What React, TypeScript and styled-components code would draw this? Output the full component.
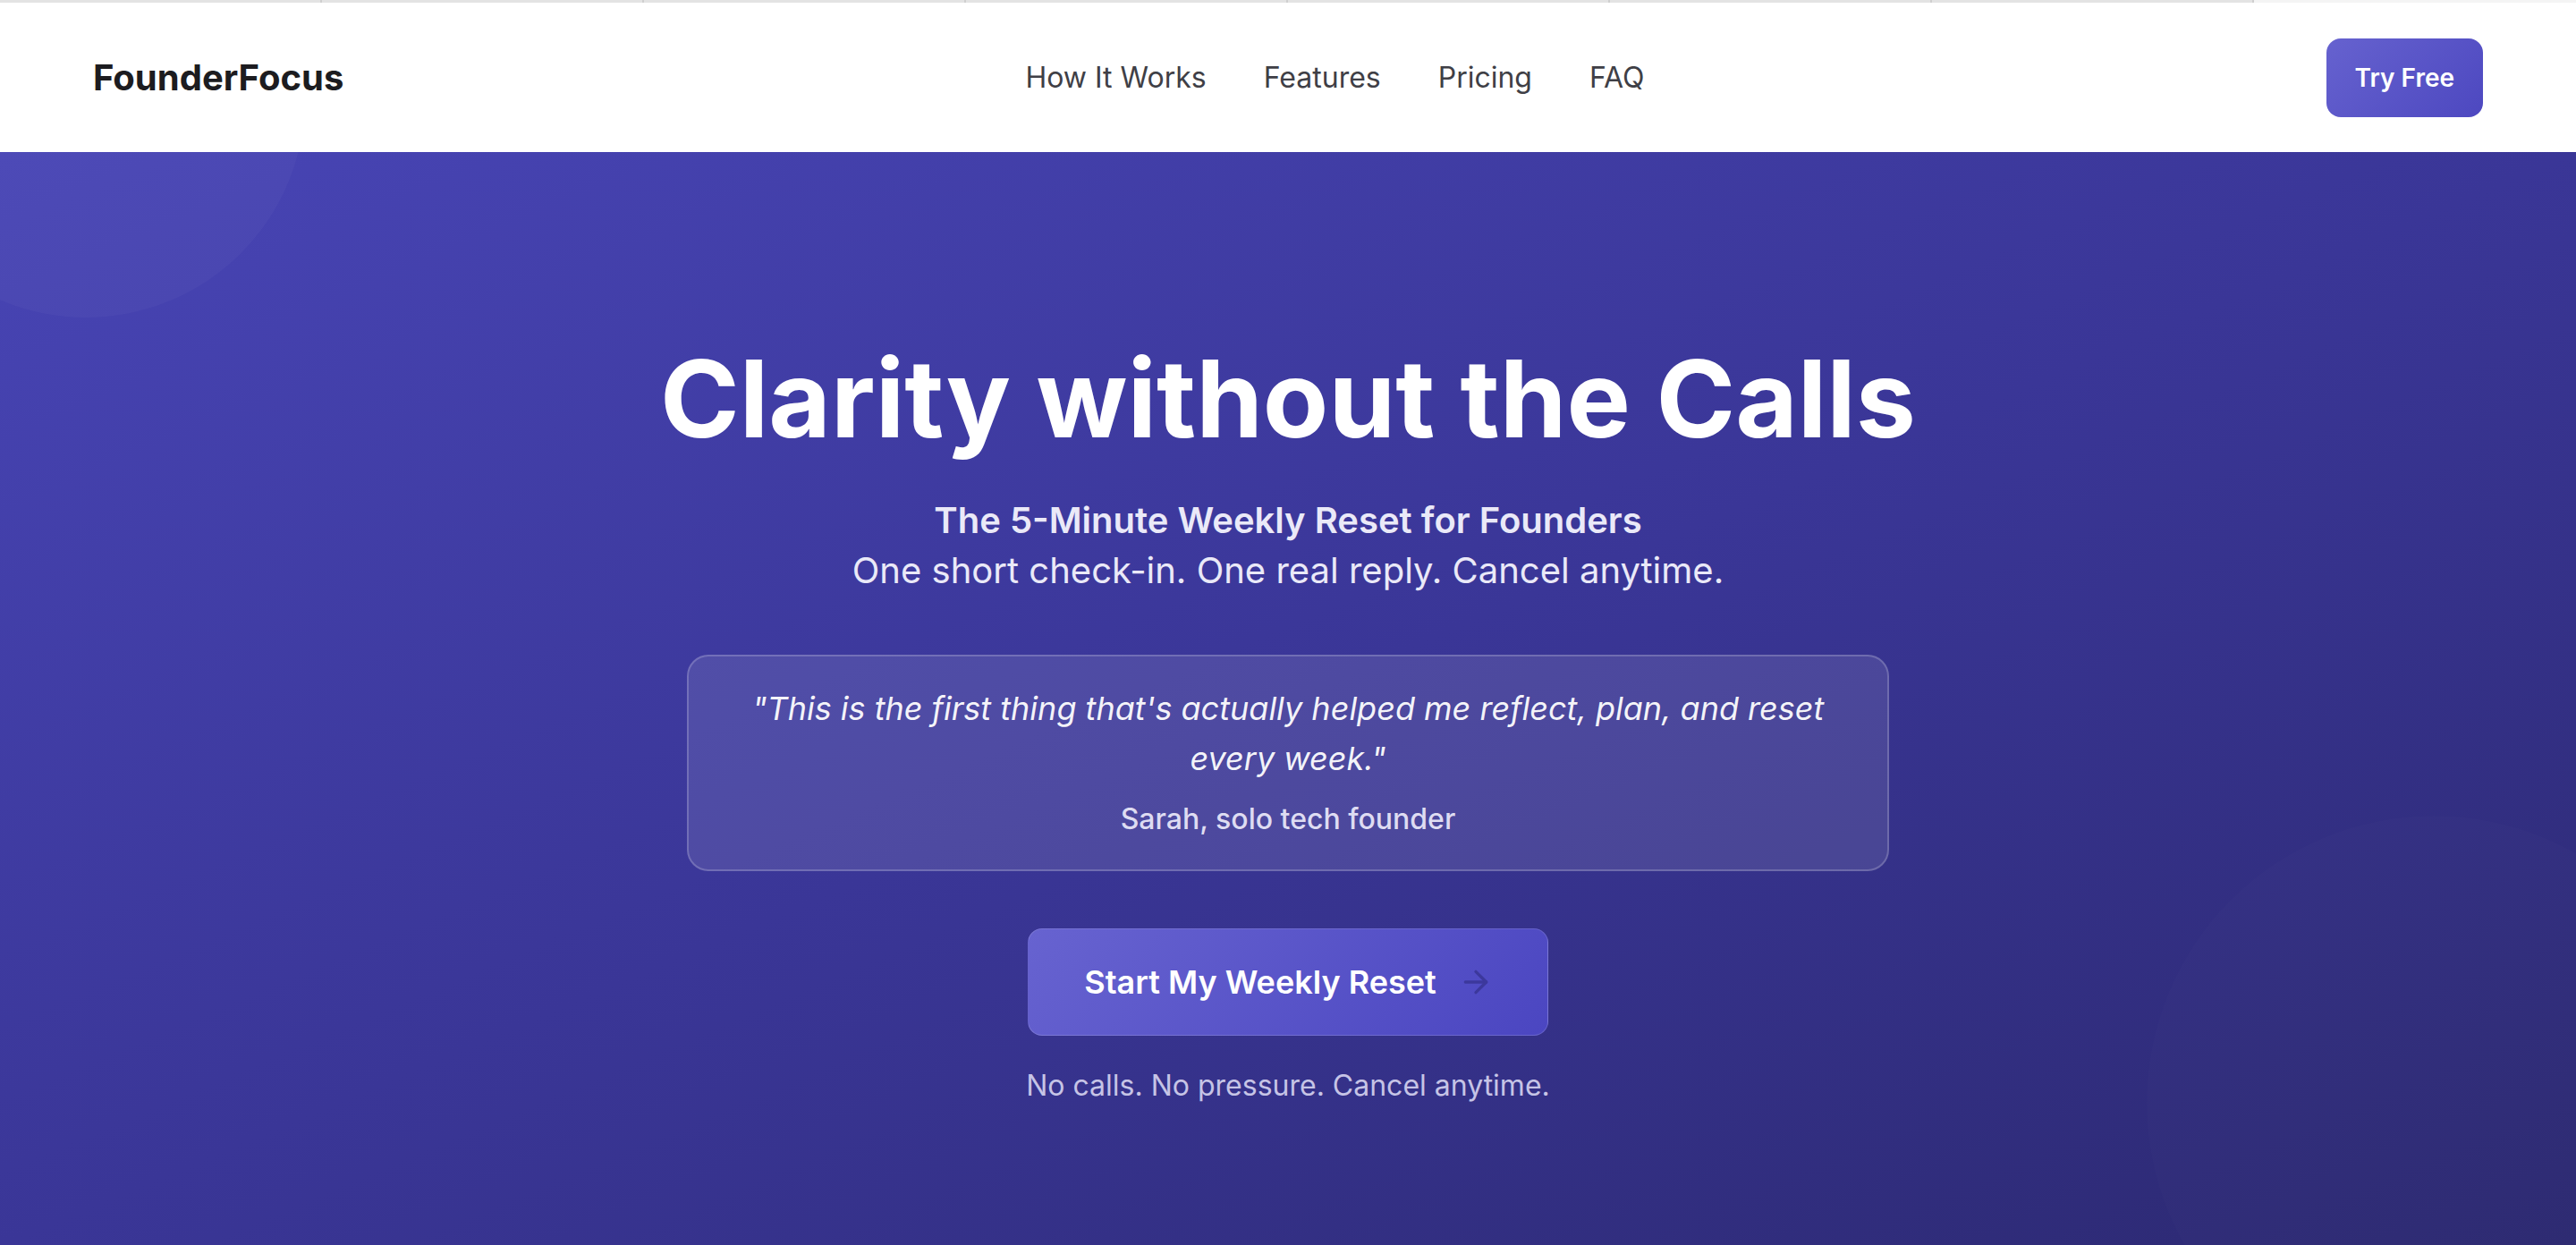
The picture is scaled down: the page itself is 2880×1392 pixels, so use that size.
import React from "react";
import styled, { createGlobalStyle } from "styled-components";
import { ArrowRight } from "lucide-react";

const GlobalStyle = createGlobalStyle`
  * { box-sizing: border-box; }
  html, body { margin: 0; padding: 0; }
  body {
    font-family: Inter, "Liberation Sans", Arial, sans-serif;
    background: #ffffff;
    -webkit-font-smoothing: antialiased;
  }
`;

const Page = styled.div`
  display: flex;
  flex-direction: column;
  min-height: 100vh;
`;

const TabStrip = styled.div`
  display: flex;
  height: 3px;
  background: #e2e2e2;
`;

const Tab = styled.div<{ $active?: boolean }>`
  flex: ${(p) => (p.$active ? "1 1 auto" : "0 0 360px")};
  background: ${(p) => (p.$active ? "#f4f4f4" : "#e3e3e3")};
  border-right: ${(p) => (p.$active ? "none" : "2px solid #cfcfcf")};
`;

const Header = styled.header`
  height: 167px;
  display: flex;
  align-items: center;
  justify-content: space-between;
  padding: 0 104px;
  background: #ffffff;
`;

const Logo = styled.div`
  font-size: 40px;
  font-weight: 700;
  color: #1c1c20;
`;

const Nav = styled.nav`
  display: flex;
  align-items: center;
  gap: 64px;
`;

const NavLink = styled.a`
  font-size: 32px;
  line-height: 48px;
  color: #3f3f46;
  text-decoration: none;
`;

const TryButton = styled.button`
  border: none;
  border-radius: 16px;
  padding: 24px 32px;
  font-family: inherit;
  font-size: 28px;
  line-height: 40px;
  font-weight: 600;
  color: #ffffff;
  background: linear-gradient(135deg, #6662cf 0%, #4d48c0 100%);
  cursor: pointer;
`;

const Hero = styled.section`
  position: relative;
  overflow: hidden;
  flex: 1;
  min-height: calc(100vh - 170px);
  background: linear-gradient(to bottom right, #4845b5 0%, #3a3697 50%, #2c2971 100%);
  display: flex;
  flex-direction: column;
  align-items: center;
  padding: 216px 0 120px;
  text-align: center;
`;

const Bubble = styled.div<{ $size: number; $alpha: number }>`
  position: absolute;
  width: ${(p) => p.$size}px;
  height: ${(p) => p.$size}px;
  border-radius: 50%;
  background: rgba(255, 255, 255, ${(p) => p.$alpha});
  pointer-events: none;
`;

const TopBubble = styled(Bubble)`
  left: -149px;
  top: -305px;
`;

const BottomBubble = styled(Bubble)`
  right: -162px;
  top: 742px;
`;

const Content = styled.div`
  position: relative;
  display: flex;
  flex-direction: column;
  align-items: center;
`;

const Title = styled.h1`
  margin: 0 0 48px;
  font-size: 120px;
  line-height: 1;
  font-weight: 700;
  color: #ffffff;
`;

const Tagline = styled.p<{ $strong?: boolean }>`
  margin: 0;
  font-size: 40px;
  line-height: 56px;
  font-weight: ${(p) => (p.$strong ? 600 : 400)};
  color: #eae9f8;
`;

const QuoteCard = styled.figure`
  margin: 66px 0 0;
  width: 1344px;
  padding: 30px 32px 32px;
  border: 2px solid rgba(255, 255, 255, 0.2);
  border-radius: 24px;
  background: rgba(255, 255, 255, 0.1);
`;

const Quote = styled.blockquote`
  margin: 0;
  font-size: 36px;
  line-height: 56px;
  font-style: italic;
  color: rgba(255, 255, 255, 0.96);
`;

const Author = styled.figcaption`
  margin-top: 16px;
  font-size: 32px;
  line-height: 48px;
  font-weight: 500;
  color: #dedcf2;
`;

const CtaButton = styled.button`
  margin-top: 64px;
  display: inline-flex;
  align-items: center;
  gap: 24px;
  padding: 31px 60px 31px 62px;
  border: 1px solid rgba(255, 255, 255, 0.14);
  border-radius: 16px;
  font-family: inherit;
  font-size: 36px;
  line-height: 56px;
  font-weight: 600;
  color: #ffffff;
  background: linear-gradient(135deg, #6763d0 0%, #4b46c1 100%);
  cursor: pointer;
`;

const ArrowIcon = styled(ArrowRight)`
  width: 40px;
  height: 40px;
  color: #3c389c;
  flex-shrink: 0;
`;

const Note = styled.p`
  margin: 32px 0 0;
  font-size: 32px;
  line-height: 48px;
  color: #c6c4e6;
`;

const navItems = ["How It Works", "Features", "Pricing", "FAQ"];

export default function App() {
  return (
    <>
      <GlobalStyle />
      <Page>
        <TabStrip>
          {Array.from({ length: 7 }).map((_, i) => (
            <Tab key={i} />
          ))}
          <Tab $active />
        </TabStrip>
        <Header>
          <Logo>FounderFocus</Logo>
          <Nav>
            {navItems.map((item) => (
              <NavLink key={item} href="#">
                {item}
              </NavLink>
            ))}
          </Nav>
          <TryButton>Try Free</TryButton>
        </Header>
        <Hero>
          <TopBubble $size={490} $alpha={0.03} />
          <BottomBubble $size={642} $alpha={0.01} />
          <Content>
            <Title>Clarity without the Calls</Title>
            <Tagline $strong>The 5-Minute Weekly Reset for Founders</Tagline>
            <Tagline>One short check-in. One real reply. Cancel anytime.</Tagline>
            <QuoteCard>
              <Quote>
                "This is the first thing that's actually helped me reflect, plan, and reset
                every week."
              </Quote>
              <Author>Sarah, solo tech founder</Author>
            </QuoteCard>
            <CtaButton>
              Start My Weekly Reset
              <ArrowIcon strokeWidth={2} />
            </CtaButton>
            <Note>No calls. No pressure. Cancel anytime.</Note>
          </Content>
        </Hero>
      </Page>
    </>
  );
}
